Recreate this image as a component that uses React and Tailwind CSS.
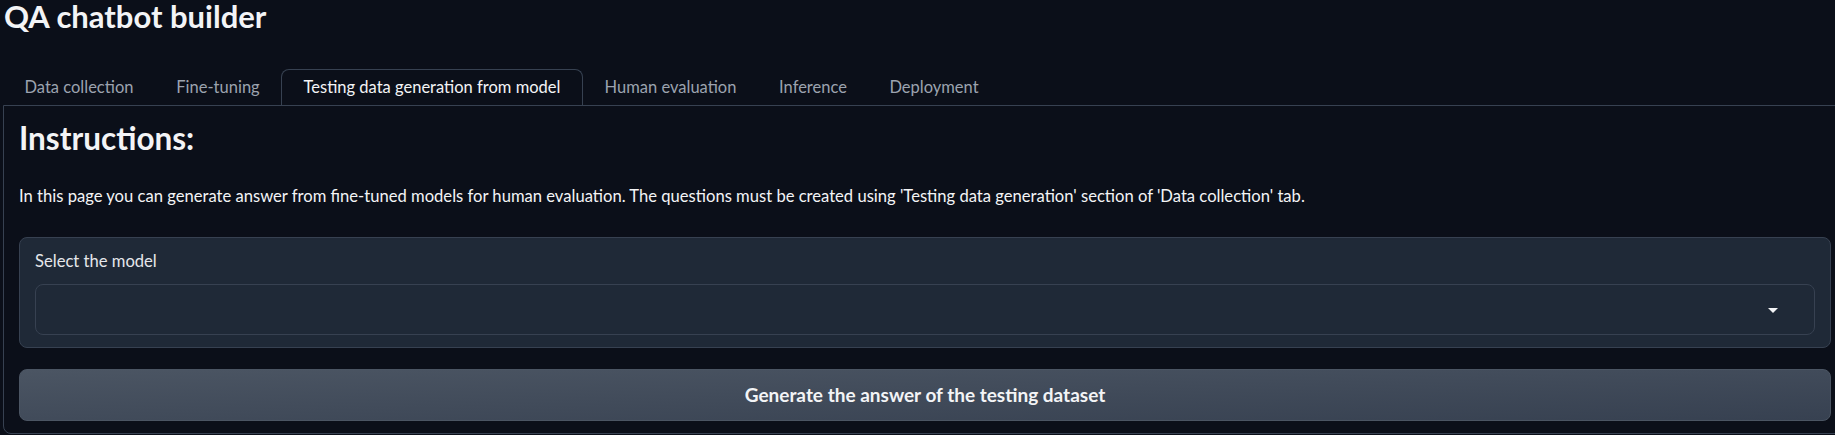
const tabs = [
  { label: 'Data collection', w: 'w-[152px]' },
  { label: 'Fine-tuning', w: 'w-[126px]' },
  { label: 'Testing data generation from model', w: 'w-[302px]', active: true },
  { label: 'Human evaluation', w: 'w-[175px]' },
  { label: 'Inference', w: 'w-[110px]' },
  { label: 'Deployment', w: 'w-[132px]' },
]

export default function App() {
  return (
    <div
      className="h-[435px] overflow-hidden bg-[#0b0f19] text-[#f3f4f6]"
      style={{ fontFamily: 'Lato, "Open Sans", sans-serif' }}
    >
      <div className="w-[1847px] pl-[3px]">
        {/* titre */}
        <h1 className="pl-[1px] text-[31px] font-bold leading-[33px]">
          QA chatbot builder
        </h1>

        {/* onglets */}
        <div className="mt-[36px] flex">
          {tabs.map(tab => (
            <button
              key={tab.label}
              className={`${tab.w} relative flex h-[36px] items-center justify-center text-[16.5px] ${
                tab.active
                  ? 'z-10 -mb-px rounded-t-lg border border-b-0 border-[#374151] bg-[#0b0f19] text-[#f3f4f6]'
                  : 'text-[#9ca3af]'
              }`}
            >
              {tab.label}
            </button>
          ))}
        </div>

        {/* contenu */}
        <div className="rounded-b-lg border border-[#374151] px-[15px] pt-[16px] pb-[12px]">
          <h2 className="text-[31.5px] font-bold leading-[33px]">Instructions:</h2>
          <p className="mt-[29px] text-[16.6px] leading-[24px]">
            In this page you can generate answer from fine-tuned models for human evaluation. The questions must be created using 'Testing data generation' section of 'Data collection' tab.
          </p>

          <div className="mt-[29px] rounded-lg border border-[#374151] bg-[#1f2937] px-[15px] pt-[13px] pb-[12px]">
            <div className="text-[16.6px] leading-[20px] text-[#e5e7eb]">Select the model</div>
            <div className="mt-[13px] flex h-[51px] items-center justify-end rounded-lg border border-[#374151] bg-[#1f2937] pr-[36px]">
              <svg width="10" height="5" viewBox="0 0 10 5" className="mt-[2px]">
                <path d="M0 0 L10 0 L5 5 Z" fill="#f3f4f6" />
              </svg>
            </div>
          </div>

          <button className="mt-[21px] flex h-[52px] w-full items-center justify-center rounded-lg border border-[#4b5563] bg-gradient-to-br from-[#4b5563] to-[#374151] text-[19px] font-bold text-[#f3f4f6]">
            Generate the answer of the testing dataset
          </button>
        </div>
      </div>
    </div>
  )
}
